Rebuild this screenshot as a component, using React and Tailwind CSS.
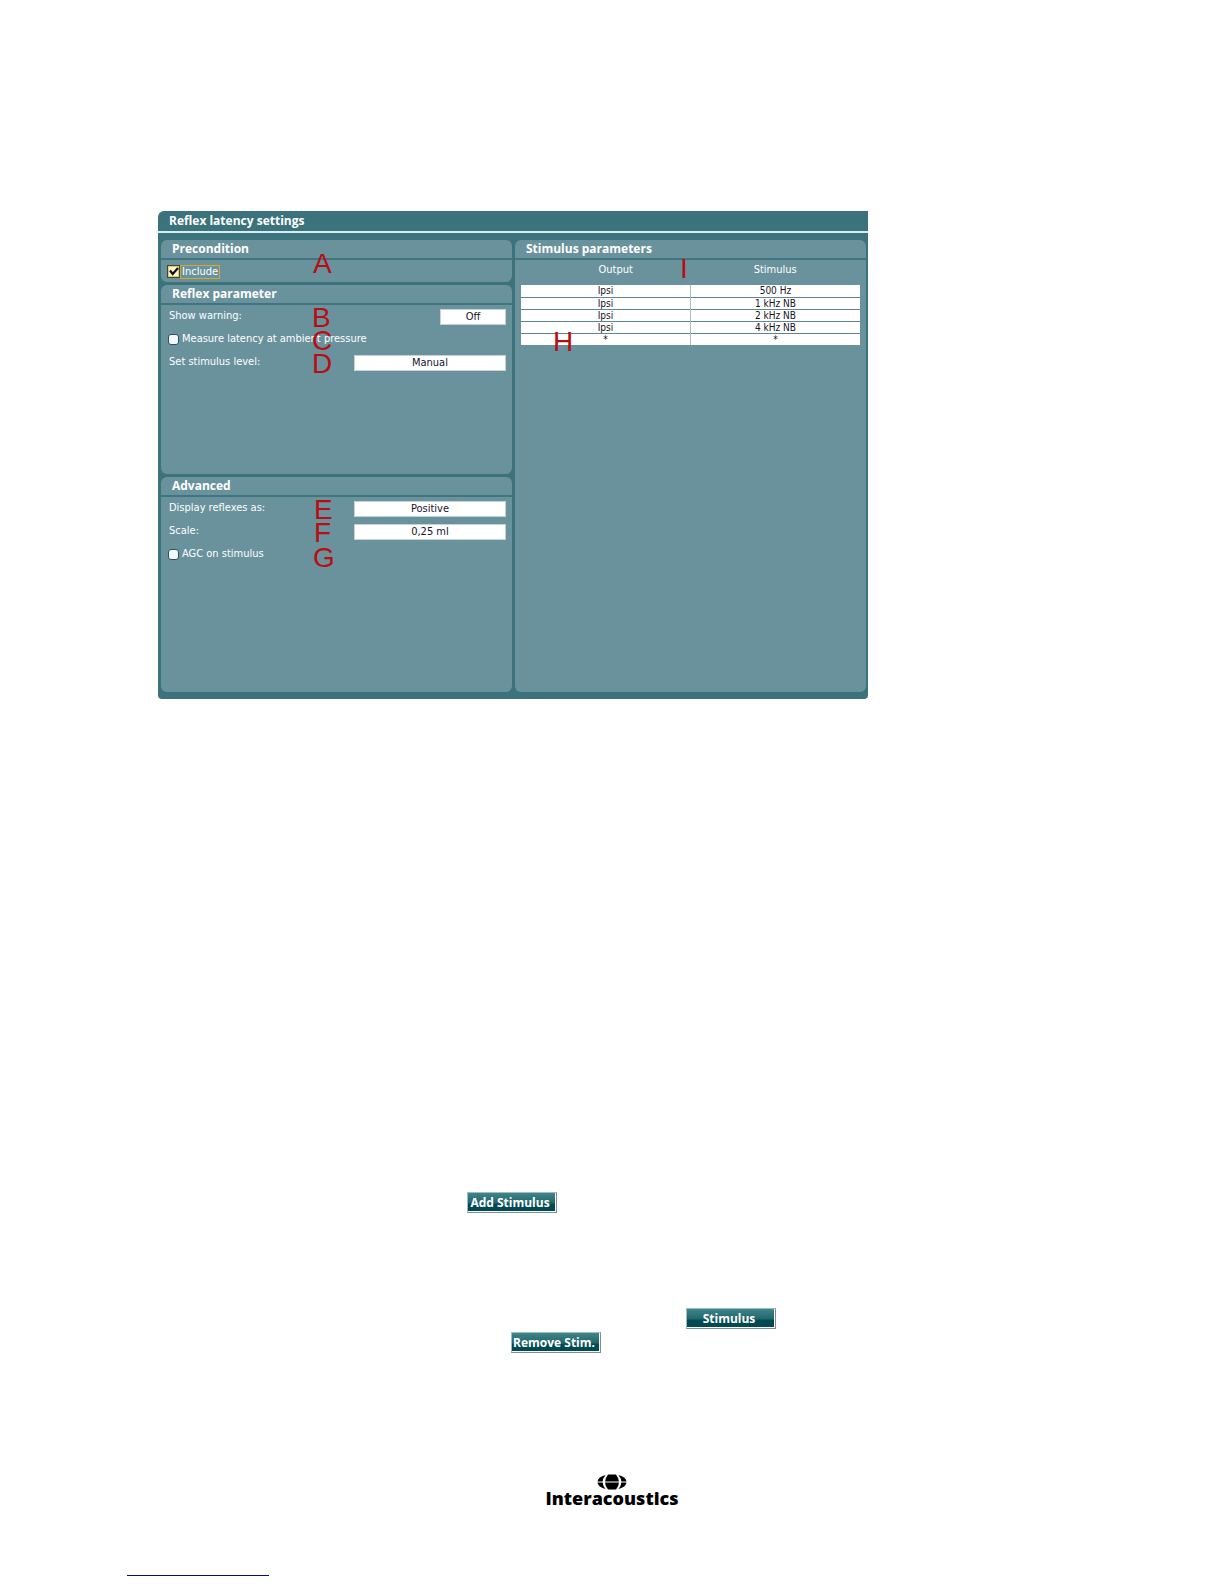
import React from "react";

const UI = "font-['DejaVu_Sans_Condensed','DejaVu_Sans',sans-serif]";
const HEAD = "font-['Open_Sans','Noto_Sans',sans-serif]";

function Mark({ children, className }) {
  return (
    <span
      className={`pointer-events-none absolute z-10 font-['Liberation_Sans',sans-serif] text-[28px] leading-[28px] text-[#b80d12] ${className}`}
    >
      {children}
    </span>
  );
}

function Panel({ title, className, children }) {
  return (
    <section className={`rounded-md bg-[#6a929d] ${className}`}>
      <h2 className={`h-5 border-b-2 border-[#3e757f] pl-[11px] text-[12px] leading-[18px] font-bold ${HEAD}`}>
        {title}
      </h2>
      {children}
    </section>
  );
}

function Row({ children }) {
  return <div className="relative flex h-[23px] items-center pr-1.5 pl-2">{children}</div>;
}

function SelectRow({ id, label, value, options, wide, mark }) {
  return (
    <Row>
      <label htmlFor={id} className="flex-1">
        {label}
      </label>
      <select
        id={id}
        defaultValue={value}
        className={`h-4 appearance-none border border-[#c3d3d8] bg-white text-center leading-[14px] text-[#14142e] [text-align-last:center] ${wide ? "w-[152px]" : "w-[66px]"}`}
      >
        {options.map((o) => (
          <option key={o}>{o}</option>
        ))}
      </select>
      {mark}
    </Row>
  );
}

function CheckRow({ id, label, checked, mark }) {
  return (
    <Row>
      <span className="relative -ml-px flex size-[11px] shrink-0">
        <input
          id={id}
          type="checkbox"
          defaultChecked={checked}
          className="peer size-[11px] appearance-none rounded-[3px] border border-[#2f4f5c] bg-[#f1f9fb] checked:rounded-none checked:border checked:border-[#e6c860] checked:bg-[#fff6d8] checked:outline checked:outline-[#3a4a3a]"
        />
        <svg
          viewBox="0 0 11 11"
          className="pointer-events-none absolute inset-0 hidden size-[11px] peer-checked:block"
          fill="none"
          stroke="#111"
          strokeWidth="2.2"
        >
          <path d="M2 4.5 L4.7 8 L10 2" />
        </svg>
      </span>
      <label
        htmlFor={id}
        className={checked ? "ml-px border border-[#dba52a] px-px leading-3" : "ml-[3px]"}
      >
        {label}
      </label>
      {mark}
    </Row>
  );
}

function ActionButton({ children, className }) {
  return (
    <button
      type="button"
      className={`h-[21px] w-[90px] border border-t-[#9fbcc0] border-r-[#7d8f93] border-b-[#7d8f93] border-l-[#9fbcc0] bg-linear-to-b from-[#3f858a] via-[#24686e] via-50% to-[#024a53] to-60% pr-1 text-[12px] leading-[18px] font-bold whitespace-nowrap text-white shadow-[inset_-1px_-1px_0_#ffffff] ${HEAD} ${className}`}
    >
      {children}
    </button>
  );
}

function Logo() {
  return (
    <div className="flex flex-col items-center text-black">
      <svg viewBox="0 0 30 16" className="h-4 w-[30px]" fill="currentColor">
        <path d="M11 0.5 H19 Q25 8 19 15.5 H11 Q5 8 11 0.5Z" />
        <path d="M8.6 0.9 Q2.6 8 8.6 15.1 Q0.5 13 0.5 8 Q0.5 3 8.6 0.9Z" />
        <path d="M21.4 0.9 Q27.4 8 21.4 15.1 Q29.5 13 29.5 8 Q29.5 3 21.4 0.9Z" />
        <path d="M0 8 H30" stroke="#fff" strokeWidth="1" />
      </svg>
      <span className="font-['Open_Sans','Noto_Sans',sans-serif] text-[18px] leading-[17px] font-extrabold">
        Interacoustics
      </span>
    </div>
  );
}

const stimuli = [
  ["Ipsi", "500 Hz"],
  ["Ipsi", "1 kHz NB"],
  ["Ipsi", "2 kHz NB"],
  ["Ipsi", "4 kHz NB"],
  ["*", "*"],
];

export default function App() {
  return (
    <main className="flex min-h-screen flex-col bg-white pt-[211px] pb-2">
      <div className={`ml-[158px] w-[58%] rounded-tl-md rounded-b-sm bg-[#3b727c] pb-[7px] text-[11px] text-white ${UI}`}>
        <h1 className={`h-[22px] border-b-2 border-[#d3edf2] pl-[11px] text-[12px] leading-[20px] font-bold ${HEAD}`}>
          Reflex latency settings
        </h1>
        <div className="mt-[7px] grid grid-cols-2 gap-[3px] pr-0.5 pl-[3px]">
          <div className="flex flex-col gap-[3px]">
            <Panel title="Precondition" className="h-[42px]">
              <CheckRow id="include" label="Include" checked mark={<Mark className="top-[-10px] left-[152px]">A</Mark>} />
            </Panel>
            <Panel title="Reflex parameter" className="h-[189px]">
              <SelectRow id="warning" label="Show warning:" value="Off" options={["Off", "On"]} mark={<Mark className="-top-px left-[151px]">B</Mark>} />
              <CheckRow id="ambient" label="Measure latency at ambient pressure" mark={<Mark className="-top-px left-[151px]">C</Mark>} />
              <SelectRow id="level" label="Set stimulus level:" value="Manual" options={["Manual"]} wide mark={<Mark className="-top-px left-[151px]">D</Mark>} />
            </Panel>
            <Panel title="Advanced" className="h-[215px]">
              <SelectRow id="display" label="Display reflexes as:" value="Positive" options={["Positive"]} wide mark={<Mark className="-top-px left-[153px]">E</Mark>} />
              <SelectRow id="scale" label="Scale:" value="0,25 ml" options={["0,25 ml"]} wide mark={<Mark className="-top-px left-[153px]">F</Mark>} />
              <CheckRow id="agc" label="AGC on stimulus" mark={<Mark className="top-px left-[152px]">G</Mark>} />
            </Panel>
          </div>
          <Panel title="Stimulus parameters" className="relative">
            <table className="mx-1.5 w-[calc(100%-12px)] table-fixed text-center">
              <thead>
                <tr className="h-[25px] align-top leading-[19px]">
                  <th className="p-0 pl-5 font-normal">Output</th>
                  <th className="p-0 font-normal">Stimulus</th>
                </tr>
              </thead>
              <tbody className="bg-white text-[10px] leading-[11px] text-[#14141e]">
                {stimuli.map(([output, stimulus], i) => (
                  <tr key={i} className="h-3 border-b border-[#5f868f] last:border-b-0">
                    <td className="border-r border-[#a9bcc1] p-0">{output}</td>
                    <td className="p-0">{stimulus}</td>
                  </tr>
                ))}
              </tbody>
            </table>
            <Mark className="top-[88px] left-[38px]">H</Mark>
            <Mark className="top-[15px] left-[165px]">I</Mark>
          </Panel>
        </div>
      </div>

      <ActionButton className="mt-[493px] ml-[467px]">Add Stimulus</ActionButton>
      <ActionButton className="mt-[95px] ml-[686px]">Stimulus</ActionButton>
      <ActionButton className="mt-[3px] ml-[511px]">Remove Stim.</ActionButton>

      <footer className="mt-[121px]">
        <Logo />
        <div className="mt-[68px] ml-[127px] h-px w-[142px] bg-[#0b0b80]" />
      </footer>
    </main>
  );
}
